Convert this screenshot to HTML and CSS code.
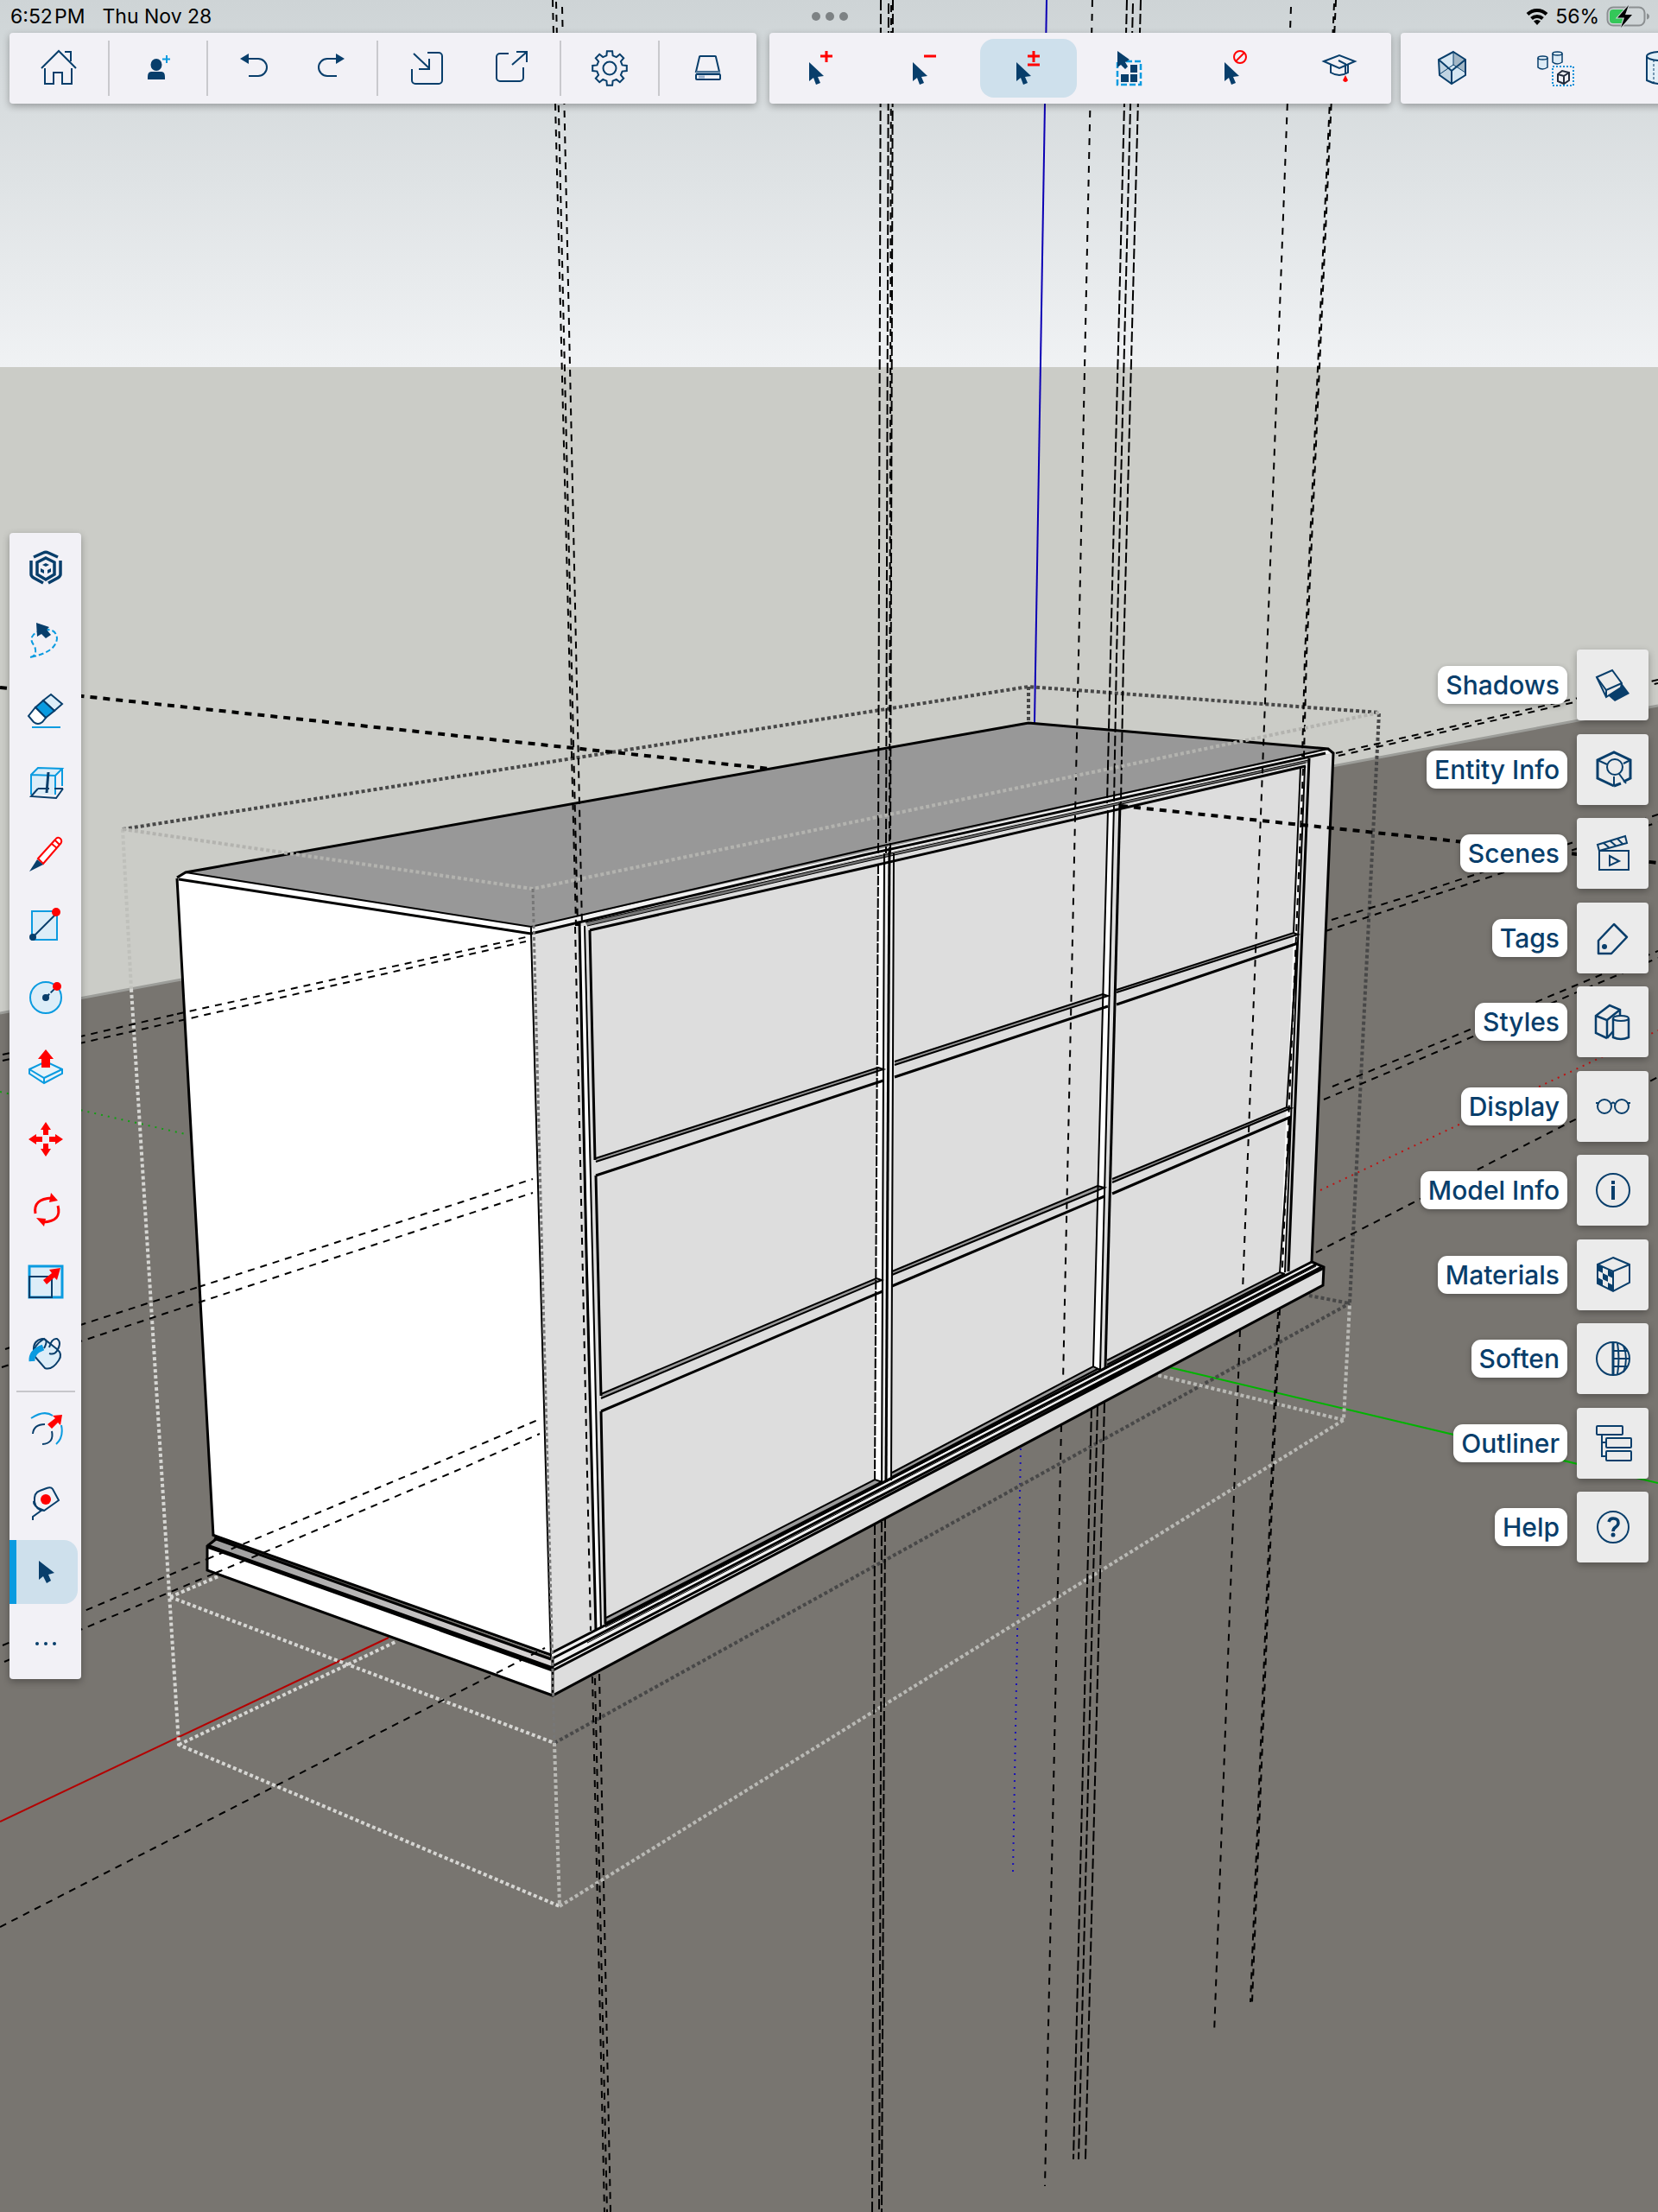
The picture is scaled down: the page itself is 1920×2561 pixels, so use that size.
FILE: index.html
```html
<!DOCTYPE html>
<html lang="en">
<head>
<meta charset="utf-8">
<meta name="viewport" content="width=device-width, initial-scale=1">
<title>Model viewer</title>
<link rel="stylesheet" href="styles.css">
</head>
<body>
<main class="app">
  <svg class="scene" viewBox="0 0 1920 2561" preserveAspectRatio="xMidYMid slice" aria-label="3D model of a shelving cabinet" role="img">
    <defs>
      <linearGradient id="sky" x1="0" y1="0" x2="0" y2="1"><stop offset="0" stop-color="#ced4d6"/><stop offset="1" stop-color="#f0f2f4"/></linearGradient>
      <linearGradient id="bevel" x1="0" y1="0" x2="1" y2="0"><stop offset="0" stop-color="#9c9c9c"/><stop offset="1" stop-color="#dcd8d8"/></linearGradient>
    </defs>
    <!-- sky and ground -->
    <rect width="1920" height="426" fill="url(#sky)"/>
    <rect y="425" width="1920" height="2136" fill="#cbccc7"/>
    <path d="M0 1173L1920 817V2561H0z" fill="#787570"/>
    <path d="M0 1173L1920 817" stroke="#9c9d99" stroke-width="3"/>

    <!-- axes -->
    <path class="axis" stroke="#0c00b4" d="M1212 0L1198 837"/>
    <path class="axis" stroke="#b40000" d="M0 2109L450 1896"/>
    <path class="axis" stroke="#00b400" d="M1354 1583L1920 1717"/>
    <path class="axis-back" stroke="#1a10b8" d="M1182 1677L1173 2167"/>
    <path class="axis-back" stroke="#c01010" d="M1529 1378L1920 1193"/>
    <path class="axis-back" stroke="#10a010" d="M0 1264L215 1313"/>

    <!-- selection box edges behind the cabinet -->
    <path class="bounds dark" d="M142 960L1191 795L1597 825L1563 1509L1516 1500M1191 795V837M642 2018L1563 1509"/>
    <path class="bounds faint" d="M142 960L152 1145"/>
    <path class="bounds light" d="M152 1145L207 2020L648 2207M197 1849L642 2018M197 1849L253 1825M207 2020L460 1900"/>
    <path class="bounds pale" d="M648 2207L1556 1644L1563 1509M1556 1644L1340 1592M642 2018L648 2207"/>

    <!-- guides outside the cabinet -->
    <path class="guide bold" d="M0 796L891 890"/>
    <path class="guide" d="M3 1221L205 1174M3 1228L207 1182M6 1562L230 1490M2 1583L230 1508"/>
    <path class="guide" d="M3 1905L240 1805M5 1924L250 1821M0 2231L631 1908"/>
    <path class="guide" d="M1547 872L1920 787M1550 875L1920 791M1542 1065L1640 1035L1920 943M1535 1078L1640 1043L1920 952"/>
    <path class="guide" d="M1543 1258L1640 1218L1920 1101M1533 1273L1640 1228L1920 1109M1524 1450L1920 1247"/>
    <path class="guide" d="M686 1941L700 2561M689 1943L703 2561M694 1938L707 2561"/>
    <path class="guide tight" d="M1013 1765L1010 2561M1021 1762L1018 2561M1025 1757L1021 2561"/>
    <path class="guide sparse" d="M1229 1650L1210 2531M1436 1540L1406 2355"/>
    <path class="guide tight" d="M1264 1630L1243 2500M1271 1628L1249 2500M1279 1624L1257 2500"/>
    <path class="guide" d="M1482 1515L1450 2318M1480 1519L1448 2318"/>

    <!-- cabinet faces -->
    <path fill="#989898" d="M215 1010L1191 837L1538 867L615 1073z"/>
    <path fill="#fff" d="M205 1016L615 1080L638 1918L247 1778z"/>
    <path fill="#ddd" d="M615 1080L1544 872L1519 1461L638 1918z"/>
    <path fill="#fff" d="M215 1010L615 1073V1080L207 1016z"/>
    <path fill="#f1f1f1" d="M615 1073L1538 867L1542 872L615 1080z"/>
    <path fill="url(#bevel)" d="M240 1790L253 1782L638 1920L640 1932z"/>
    <path fill="#f1f1f1" d="M638 1914L1519 1461L1533 1467L640 1934z"/>
    <path fill="#fff" d="M240 1790L640 1934V1963L240 1818z"/>
    <path fill="#ddd" d="M640 1934L1533 1467L1532 1488L640 1963z"/>

    <!-- white inner sides of the openings -->
    <path fill="#fff" d="M672 1072H677L694 1884H690zM1017 1000L1024 998L1021 1715L1013 1713zM1283 938L1290 934L1274 1585L1266 1582zM1506 888L1512 886L1488 1473L1482 1474z"/>
    <path fill="#f0f0f0" d="M1026 990H1034L1031 1714H1023z"/>
    <!-- shelf tops and bottom rail -->
    <path fill="#9a9a9a" d="M690 1341L1017 1236L1023 1238L690 1345zM696 1614L1015 1480L1021 1482L696 1619zM1036 1229L1277 1151L1283 1153L1036 1233zM1033 1472L1271 1373L1279 1375L1033 1476zM1293 1146L1498 1080L1503 1082L1293 1149zM1288 1365L1490 1282L1495 1283L1288 1369z"/>
    <path fill="#9a9a9a" d="M702 1873L1013 1713L1022 1715L702 1879zM1033 1705L1266 1582L1274 1585L1033 1709zM1282 1575L1482 1473L1488 1475L1282 1580z"/>
    <path fill="#777" d="M678 1068L1000 995L1515 880V883L1000 998L680 1072z"/>

    <!-- cabinet edges -->
    <path class="edge heavy" d="M205 1016L215 1010L1191 837L1538 867L1544 872L1519 1461L1533 1467L1532 1488L640 1963L240 1818V1790L250 1782"/>
    <path class="edge heavy" d="M205 1017L247 1778M207 1018L615 1081L1000 990L1535 872"/>
    <path class="edge" d="M215 1010L615 1073L1000 984L1538 867M615 1073V1081L638 1920"/>
    <path class="edge thin" d="M678 1068L1000 995L1515 880M680 1072L1000 998L1512 883"/>
    <path class="edge heavy" d="M683 1077L1000 1005L1512 887M1516 878L1492 1472"/>
    <path class="edge" d="M1511 887L1488 1473M1506 889L1498 1080M1502 1094L1490 1282M1494 1294L1482 1474"/>
    <path class="edge heavy" d="M671 1068L679 1450L690 1887M683 1077L689 1343M690 1361L696 1616M696 1634L701 1880"/>
    <path class="edge" d="M677 1072L686 1450L696 1884"/>
    <path class="edge" d="M1017 1001L1013 1713" stroke-dasharray="11 2"/>
    <path class="edge" d="M1024 988L1021 1717M1035 988L1032 1714"/>
    <path class="edge heavy" d="M1030 986L1026 1716"/>
    <path class="edge" d="M1283 938L1266 1582M1290 932L1274 1586"/>
    <path class="edge heavy" d="M1297 930L1280 1584"/>
    <path class="edge" d="M690 1341L1017 1236L1023 1238L690 1345M696 1614L1015 1480L1021 1482L696 1619M1036 1229L1277 1151L1283 1153L1036 1233M1033 1472L1271 1373L1279 1375L1033 1476M1293 1146L1498 1080L1503 1082L1293 1149M1288 1365L1490 1282L1495 1283L1288 1369"/>
    <path class="edge heavy" d="M690 1361L1023 1251M696 1634L1022 1495M1036 1247L1283 1165M1033 1489L1279 1385M1293 1163L1503 1092M1288 1382L1495 1293"/>
    <path class="edge" d="M702 1873L1013 1713L1022 1716M702 1879L1020 1716M1033 1705L1266 1582L1274 1586M1033 1710L1271 1585M1282 1575L1482 1473L1488 1475M1282 1580L1487 1475"/>
    <path class="edge thin" d="M701 1884L1500 1471"/>
    <path class="edge heavy" d="M638 1914L1519 1461M640 1920L1524 1464M640 1929L1530 1467M640 1934L1533 1468"/>
    <path class="edge thin" d="M680 1902L1524 1466"/>
    <path class="edge heavy" d="M246 1777L638 1916M248 1781L638 1921M240 1789L640 1931M240 1791L640 1934M640 1920V1963"/>

    <!-- guides in front of the cabinet -->
    <path class="guide" d="M205 1174L609 1085M207 1182L609 1090M230 1490L617 1365M230 1508L617 1381M240 1805L492 1700L625 1643M250 1821L535 1700L625 1660M575 1937L631 1908"/>
    <path class="guide" d="M640 0L667 1072M644 2L669 1072M651 8L674 1072M666 1073L684 1888"/>
    <path class="guide tight" d="M1020 0L1017 990M1029 4L1026 988M1034 0L1031 988"/>
    <path class="guide" d="M1032 6L1030 988"/>
    <path class="guide sparse" d="M1265 0L1249 760L1231 1600M1495 8L1467 760L1439 1495"/>
    <path class="guide tight" d="M1305 0L1286 760L1282 930M1312 4L1293 760L1290 930M1321 0L1301 760L1298 930"/>
    <path class="guide" d="M1547 0L1513 760L1510 876M1545 4L1511 760L1508 876M1509 890L1485 1468"/>
    <path class="guide bold" d="M1298 933L1640 969L1920 999"/>

    <!-- selection box edges in front -->
    <path class="bounds top" d="M142 960L617 1029L1597 825"/>
    <path class="bounds mid" d="M617 1029L640 1934L642 2018"/>
  </svg>

  <header class="top">
    <div class="status">
      <div class="status-left"><span>6:52&#8202;PM</span><span>Thu Nov 28</span></div>
      <div class="dots"><i></i><i></i><i></i></div>
      <div class="status-right">
        <svg width="26" height="20" viewBox="0 0 26 20"><g fill="none" stroke="#000" stroke-width="4"><path d="M2 7.500a15.500 15.500 0 0 1 22 0"/><path d="M6.500 12.500a9.500 9.500 0 0 1 13 0"/></g><path d="M13 20l-4-4.500a6 6 0 0 1 8 0z"/></svg>
        <span>56%</span>
        <svg width="50" height="26" viewBox="0 0 50 26"><rect x="1.500" y="2.500" width="43" height="21" rx="6.500" fill="none" stroke="#8b8f91" stroke-width="2"/><path d="M47 9.500v7q3-1 3-3.500t-3-3.500z" fill="#8b8f91"/><path d="M8 5h14l-4 16H8q-4 0-4-4V9q0-4 4-4z" fill="#34c759"/><path d="M26 0L13 14.500h8L17 26l13-15h-8z" stroke="#d0d6d8" stroke-width="2" paint-order="stroke"/></svg>
      </div>
    </div>

    <nav class="toolbars" aria-label="Toolbars">
      <div class="toolbar file">
        <div class="group"><button aria-label="Home"><svg class="icon" viewBox="0 0 48 48"><path d="M4 24L24 4l20 20M31 5h7v11M8 24v18h10V29h10v13h11V24"/></svg></button></div>
        <div class="group"><button aria-label="Add person"><svg class="icon" viewBox="0 0 48 48"><g class="solid"><ellipse cx="22" cy="20" rx="6.500" ry="7"/><path d="M12 37v-3q0-6 4-6h12q4 0 4 6v3z"/></g><path stroke="#0a9be0" d="M34 9v9M29 13.500h9"/></svg></button></div>
        <div class="group undo"><button aria-label="Undo"><svg class="icon" viewBox="0 0 48 48"><path d="M16 13h13a10 10 0 0 1 0 20H18"/><path class="solid" d="M8 13l10-6v12z"/></svg></button><button aria-label="Redo"><svg class="icon" viewBox="0 0 48 48"><path d="M30 13H19a10 10 0 0 0 0 20h11"/><path class="solid" d="M39 13l-10-6v12z"/></svg></button></div>
        <div class="group share"><button aria-label="Import"><svg class="icon" viewBox="0 0 48 48"><path d="M7 25v13a4 4 0 0 0 4 4h27a4 4 0 0 0 4-4V10a4 4 0 0 0-4-4H25M9 7l18 17M15 25h12V13"/></svg></button><button aria-label="Export"><svg class="icon" viewBox="0 0 48 48"><path d="M21 7H11a4 4 0 0 0-4 4v24a4 4 0 0 0 4 4h23a4 4 0 0 0 4-4V23M25 20L41 6M30 5h12v12"/></svg></button></div>
        <div class="group"><button aria-label="Settings"><svg class="icon" viewBox="0 0 48 48"><path d="M20.400 9.400L20.900 4.200H27.100L27.600 9.400L31.800 11.100L35.800 7.800L40.200 12.200L36.900 16.200L38.600 20.400L43.800 20.900V27.100L38.600 27.600L36.900 31.800L40.200 35.800L35.800 40.200L31.800 36.900L27.600 38.600L27.100 43.800H20.900L20.400 38.600L16.200 36.900L12.200 40.200L7.800 35.800L11.100 31.800L9.400 27.600L4.200 27.100V20.900L9.400 20.400L11.100 16.200L7.800 12.200L12.200 7.800L16.200 11.100z"/><circle cx="24" cy="24" r="7.500"/></svg></button></div>
        <div class="group"><button aria-label="Scan"><svg class="icon" viewBox="0 0 48 48"><path d="M15 10h17q1 0 1 1l4 17H10l4-17q0-1 1-1z"/><path stroke="#6d8eac" stroke-width="3" d="M10 29h28"/><rect x="10" y="31" width="28" height="6" rx="1"/><path stroke="#9ab0cc" stroke-width="3" d="M13 34h7"/></svg></button></div>
      </div>

      <div class="toolbar select">
        <button aria-label="Add to selection"><svg class="icon" viewBox="0 0 48 48"><path class="solid" d="M10 17v22l5-4 3 8 5-2-3-7 7-1z"/><path class="red sign" d="M30 4v13M23 10h14"/></svg></button>
        <button aria-label="Remove from selection"><svg class="icon" viewBox="0 0 48 48"><path class="solid" d="M10 17v22l5-4 3 8 5-2-3-7 7-1z"/><path class="red sign" d="M23 10h14"/></svg></button>
        <button class="active" aria-label="Toggle selection" aria-pressed="true"><svg class="icon" viewBox="0 0 48 48"><path class="solid" d="M10 17v22l5-4 3 8 5-2-3-7 7-1z"/><path class="red sign" d="M30 4v13M23 10h14M23 20h14"/></svg></button>
        <button aria-label="Select all"><svg class="icon" viewBox="0 0 48 48"><path stroke="#0a9be0" stroke-width="2.500" stroke-dasharray="7 3" d="M7 16h27v27H7z"/><path class="solid" d="M22 20h8v9h-8zM11 31h9v9h-9zM22 31h8v9h-8z"/><path class="solid" d="M7 4v19l4-3 5 5 3-3-3-5 5-3z"/></svg></button>
        <button aria-label="Select none"><svg class="icon" viewBox="0 0 48 48"><path class="solid" d="M11 17v22l5-4 3 8 5-2-3-7 7-1z"/><circle class="red" cx="29" cy="11" r="7"/><path class="red" d="M24 16L34 6"/></svg></button>
        <button aria-label="Learn"><svg class="icon" viewBox="0 0 48 48"><path d="M6 16L24 9l18 7-18 8zM14 20v9q10 6 20 0v-9M23 15l8 4v12"/><path class="redfill" d="M31 32l3 6q-3 4-6 0z"/></svg></button>
      </div>

      <div class="toolbar models">
        <button aria-label="Solid"><svg class="icon" viewBox="0 0 48 48"><path fill="#d5e6f2" stroke="none" d="M25 5l14 9v18L23 42 9 32 8 14z"/><path fill="#a3b7c6" stroke="none" d="M25 5l14 9v14L25 20z"/><path fill="#c0d4e2" stroke="none" d="M8 14l15 12v16L9 32z"/><path stroke-width="1" d="M25 5v15L9 31M25 20l14 9"/><path d="M25 5l14 9v18L23 42 9 32 8 14zM8 14l15 13 16-13M23 27v15"/></svg></button>
        <button aria-label="Components"><svg class="icon" viewBox="0 0 48 48"><g stroke-width="1.500" fill="#dceaf5"><path d="M3 12v11q5 4 11 0V12"/><ellipse cx="8.500" cy="12" rx="5.500" ry="2"/><path d="M20 7v10q5 4 11 0V7"/><ellipse cx="25.500" cy="7" rx="5.500" ry="2"/></g><path stroke="#0a8fd8" stroke-dasharray="2 2" d="M20 22h24v22H20z"/><path stroke="#222b3c" d="M26 31l5-4 8 2v9l-6 4-7-3zM26 31l7 2v8M33 33l6-4"/></svg></button>
        <button aria-label="Primitives"><svg class="icon" viewBox="0 0 48 48"><path fill="#e3f0f8" d="M9 10v28q15 8 30 0V10"/><ellipse cx="24" cy="10" rx="15" ry="5" fill="#e3f0f8"/><path stroke-width="1" stroke-dasharray="3 2" d="M17 14v28"/></svg></button>
      </div>
    </nav>
  </header>

  <nav class="tools" aria-label="Drawing tools">
    <button aria-label="Menu"><svg class="icon" viewBox="0 0 48 48"><g stroke-width="3.500"><path d="M10 11l11-5q3-1.500 6 0l11 5M7 15v16q0 2 3 4l11 6M41 15v16q0 2-3 4l-11 6"/><path d="M24 12l10 5v14l-10 6-10-6V17z"/></g><path class="solid" d="M24 18l4 2-4 2-4-2zM18 24l4 2v4l-4-2zM30 24l-4 2v4l4-2z"/></svg></button>
    <button aria-label="Lasso"><svg class="icon" viewBox="0 0 48 48"><path class="blue" stroke-dasharray="6 3" d="M6 44q9-2 5-13-6-7-2-12Q13 13 26 12q10 0 11 10-1 16-31 22"/><path class="solid" d="M13 4l15 5-3 3 5 6-6 4-5-5-5 3z"/></svg></button>
    <button aria-label="Eraser"><svg class="icon" viewBox="0 0 48 48"><path fill="#dcedf8" d="M30 5l13 11-9 8-13-12z"/><path fill="#0a9be0" d="M21 12l13 12-10 8-12-12z"/><path fill="#fff" d="M12 20l12 12-4 5q-5 4-10 0l-6-7z"/><path class="blue" d="M8 43h33"/></svg></button>
    <button aria-label="Section plane"><svg class="icon" viewBox="0 0 48 48"><path fill="#dcedf8" stroke="none" d="M7 15l8-8h28l-8 9v22H7z"/><path class="blue" d="M7 38V15l8-8 28 1-8 8v22M7 15l28 1M43 8v20"/><path d="M15 31L7 40l29 2 8-11M15 31h13M34 31h10"/><path stroke-width="3" d="M27 12l-2 24"/></svg></button>
    <button aria-label="Pencil"><svg class="icon" viewBox="0 0 48 48"><path class="red" fill="#fff" d="M15 29L35 7q3-4 6-1t-1 7L21 35zM31 12l6 5M35 8l5 5"/><path class="solid" d="M5 44l9-14 7 6z"/></svg></button>
    <button aria-label="Rectangle"><svg class="icon" viewBox="0 0 48 48"><path class="blue" fill="#dcedf8" d="M8 8h29v33H8z"/><path d="M10 37L36 11"/><circle class="solid" cx="9" cy="38" r="4"/><circle class="redfill" cx="36" cy="9" r="5"/></svg></button>
    <button aria-label="Circle"><svg class="icon" viewBox="0 0 48 48"><circle class="blue" fill="#dcedf8" cx="24" cy="25" r="18"/><path stroke-dasharray="6 2" d="M24 25l12-12"/><circle class="solid" cx="24" cy="25" r="4"/><circle class="redfill" cx="37" cy="12" r="5"/></svg></button>
    <button aria-label="Push pull"><svg class="icon" viewBox="0 0 48 48"><path class="blue" fill="#e8f3fa" d="M5 26l19-9 19 9v5L22 42 5 31z"/><path class="blue" d="M5 26l17 10 21-10M22 36v6"/><path class="redfill" d="M24 3l9 11h-4v10H19V14h-4z"/></svg></button>
    <button aria-label="Move"><svg class="icon" viewBox="0 0 48 48"><path class="redfill" d="M24 4l6 9h-3v6h-6v-6h-3zM24 44l-6-9h3v-6h6v6h3zM4 24l9-6v3h7v6h-7v3zM44 24l-9 6v-3h-7v-6h7v-3z"/></svg></button>
    <button aria-label="Rotate"><svg class="icon" viewBox="0 0 48 48"><path class="red" stroke-width="3" d="M12 28q-3-17 19-18M38 19q5 18-17 19"/><path class="redfill" d="M30 4l8 9-10 2zM22 43l-9-10 11 1z"/></svg></button>
    <button aria-label="Scale"><svg class="icon" viewBox="0 0 48 48"><path class="blue" stroke-width="3" fill="#dcedf8" d="M5 6h38v36H5z"/><path d="M5 18h26v24H5z"/><path class="redfill" d="M21 22l10-8-3-4 13-2-4 14-3-3-9 8z"/></svg></button>
    <button aria-label="Paint"><svg class="icon" viewBox="0 0 48 48"><path fill="#dcedf8" d="M22 8l15 12q7 6 2 13-8 12-16 9L10 27Q9 16 22 8z"/><path d="M10 22Q9 10 20 8q8 0 2 11M28 18q3-11 9-10 6 4 0 14-3 5-9 3"/><path class="blue" stroke-width="7" d="M8 34q-1-11 13-16"/></svg></button>
    <hr>
    <button aria-label="Offset"><svg class="icon" viewBox="0 0 48 48"><path class="blue" d="M7 11Q22 1 32 8M42 19q3 14-6 22"/><path d="M9 29Q10 18 23 18M31 26q3 14-11 15"/><path class="redfill" d="M26 18l9-7-3-3 11-1-2 12-3-3-7 7z"/></svg></button>
    <button aria-label="Tape measure"><svg class="icon" viewBox="0 0 48 48"><path d="M11 25q-1-11 6-13l8-3q5-2 7 1l7 13-17 12q-9 0-11-10z"/><circle class="redfill" cx="24" cy="22" r="6"/><path d="M10 24q-1 6 10 10L9 42v4"/></svg></button>
    <button class="active" aria-label="Select" aria-pressed="true"><svg class="icon" viewBox="0 0 48 48"><path class="solid" d="M16 11v22l5-4 4 8 5-3-3-7 7-2z"/></svg></button>
    <button aria-label="More tools"><svg class="icon" viewBox="0 0 48 48"><g class="solid"><circle cx="14" cy="24" r="2"/><circle cx="24" cy="24" r="2"/><circle cx="34" cy="24" r="2"/></g></svg></button>
  </nav>

  <nav class="panels" aria-label="Panels">
    <button><span class="name">Shadows</span><span class="tile"><svg class="icon" viewBox="0 0 48 48"><path class="solid" d="M18 36l16-14 9 12-17 9z"/><path fill="#ebebeb" d="M5 15l18-8 11 15-1 5-17 11z"/><path d="M5 15l11 15 18-8M16 30v8"/></svg></span></button>
    <button><span class="name">Entity Info</span><span class="tile"><svg class="icon" viewBox="0 0 48 48"><path stroke-width="3" d="M25 43L6 34V13l19-9 19 9v21l-8 4M25 43l8-3"/><path d="M6 13l11 5M44 13l-8 4M25 32v11M31 29l8 11"/><circle cx="26" cy="21" r="9" fill="#ebebeb"/></svg></span></button>
    <button><span class="name">Scenes</span><span class="tile"><svg class="icon" viewBox="0 0 48 48"><path d="M8 21h34v22H8zM8 21l-2-7 32-10 2 8zM13 12l6 5M21 10l6 5M29 7l6 6M20 27l11 6-11 5z"/></svg></span></button>
    <button><span class="name">Tags</span><span class="tile"><svg class="icon" viewBox="0 0 48 48"><path stroke-width="2.500" stroke-linejoin="round" d="M25 8l15 15-18 19H7V27z"/><circle class="solid" cx="14" cy="34" r="3"/></svg></span></button>
    <button><span class="name">Styles</span><span class="tile"><svg class="icon" viewBox="0 0 48 48"><path stroke-width="2.500" d="M17 43L4 37V17L20 5l12 5v8M4 17l13 5v21M17 22L32 10M17 43l8-9"/><path fill="#ebebeb" stroke-width="2.500" d="M24 20v22q9 4 18 0V20"/><ellipse fill="#ebebeb" cx="33" cy="20" rx="9" ry="3"/></svg></span></button>
    <button><span class="name">Display</span><span class="tile"><svg class="icon" viewBox="0 0 48 48"><circle cx="14" cy="24" r="8"/><circle cx="34" cy="24" r="8"/><path d="M22 21q2-3 4 0M4 20h4M40 20h4"/></svg></span></button>
    <button><span class="name">Model Info</span><span class="tile"><svg class="icon" viewBox="0 0 48 48"><circle cx="24" cy="24" r="19"/><path stroke-width="4" d="M24 19v16M24 13v4"/></svg></span></button>
    <button><span class="name">Materials</span><span class="tile"><svg class="icon" viewBox="0 0 48 48"><path d="M24 4l19 8v21L24 43 6 34V12zM6 12l18 8 19-8M24 20v23"/><path class="solid" d="M6 12l6 3v7l-6-3zM18 18l6 3v7l-6-3zM12 22l6 3v7l-6-3zM6 27l6 3v7l-6-3zM18 33l6 3v7l-6-3z"/></svg></span></button>
    <button><span class="name">Soften</span><span class="tile"><svg class="icon" viewBox="0 0 48 48"><circle cx="24" cy="24" r="19"/><path stroke-width="3" d="M24 5v38"/><path d="M29 6q3 18 0 36M36 9q6 15 0 31M24 15h17M24 24h19M24 33h17"/></svg></span></button>
    <button><span class="name">Outliner</span><span class="tile"><svg class="icon" viewBox="0 0 48 48"><rect x="5" y="4" width="30" height="10" rx="1"/><rect x="16" y="18" width="29" height="11" rx="1"/><rect x="16" y="33" width="29" height="11" rx="1"/><path d="M11 14v25h5M11 23h5"/></svg></span></button>
    <button><span class="name">Help</span><span class="tile"><svg class="icon" viewBox="0 0 48 48"><circle cx="24" cy="24" r="18"/><path stroke-width="3.500" d="M19 18q1-4 5-4 6 0 6 5 0 3-3 5-3 2-3 5"/><circle class="solid" cx="24" cy="33" r="2.500"/></svg></span></button>
  </nav>
</main>
</body>
</html>
```
FILE: styles.css
```css
* { box-sizing: border-box; }

body {
  margin: 0;
  font-family: Inter, "Liberation Sans", sans-serif;
  color: #000;
}

/* Everything shares one grid cell, so the controls float over the scene. */
.app {
  display: grid;
  grid-template: minmax(100vh, auto) / minmax(0, 1fr);
  overflow: hidden;
  background: #787570;
}
.app > * { grid-area: 1 / 1; }

.scene {
  display: block;
  width: 100%;
  height: 100%;
}
.axis, .axis-back, .guide, .edge, .bounds { fill: none; }
.axis { stroke-width: 2; }
.axis-back { stroke-width: 2; stroke-dasharray: 2 6; }
.guide { stroke: #000; stroke-width: 2; stroke-dasharray: 8 7; }
.guide.tight { stroke-dasharray: 12 4; }
.guide.sparse { stroke-dasharray: 8 8; }
.guide.bold { stroke-width: 4; }
.edge { stroke: #000; stroke-width: 2; }
.edge.heavy { stroke-width: 3; }
.edge.thin { stroke-width: 1; }
.bounds { stroke-width: 4; stroke-dasharray: 4 3; }
.bounds.dark { stroke: #484848; }
.bounds.light { stroke: #d6d6d3; }
.bounds.pale { stroke: #b9b9b5; }
.bounds.faint { stroke: #bfc0bb; }
.bounds.top { stroke: #b3b3af; }
.bounds.mid { stroke: #777; stroke-width: 3; }

button {
  display: flex;
  align-items: center;
  justify-content: center;
  padding: 0;
  border: 0;
  background: none;
  font: inherit;
  color: inherit;
}

.icon {
  width: 48px;
  height: 48px;
  flex: none;
  fill: none;
  stroke: #083e6b;
  stroke-width: 2;
}
.icon .solid { fill: #083e6b; stroke: none; }
.icon .red { stroke: #f00; }
.icon .sign { stroke-width: 3; }
.icon .redfill { fill: #f00; stroke: none; }
.icon .blue { stroke: #0a9be0; }

.top { align-self: start; min-width: 0; }

.status {
  display: grid;
  grid-template-columns: 1fr auto 1fr;
  align-items: center;
  height: 38px;
  padding: 0 10px 0 12px;
  font-size: 23px;
  line-height: 36px;
}
.status-left, .status-right, .dots { display: flex; align-items: center; }
.status-left { gap: 20px; }
.status-right { justify-content: flex-end; gap: 8px; }
.dots { gap: 6px; }
.dots i { width: 10px; height: 10px; border-radius: 50%; background: #7d8284; }

.toolbars { display: flex; padding-left: 11px; }
.toolbar {
  display: flex;
  flex: none;
  align-items: center;
  height: 82px;
  border-radius: 4px;
  background: #f2f1f6;
  box-shadow: 0 3px 8px rgba(0, 0, 0, 0.3);
}
.toolbar.file { margin-right: 15px; }
.toolbar.select { margin-right: 11px; }
.group {
  display: flex;
  justify-content: center;
  width: 114px;
  height: 64px;
}
.group + .group { border-left: 2px solid #c9c9cd; }
.group.undo { width: 197px; gap: 42px; }
.group.share { width: 212px; gap: 50px; }
.select button, .models button { width: 120px; height: 68px; }
.select .active {
  width: 112px;
  margin: 0 4px;
  border-radius: 16px;
  background: #cee0ec;
}

.tools {
  display: flex;
  flex-direction: column;
  place-self: center start;
  width: 83px;
  min-height: 1327px;
  margin-left: 11px;
  border-radius: 4px;
  background: #f2f1f6;
  box-shadow: 0 3px 8px rgba(0, 0, 0, 0.3);
}
.tools button {
  flex: 1;
  margin: 4px 4px 4px 0;
  padding-left: 4px;
}
.tools hr {
  width: 68px;
  height: 2px;
  margin: 2px auto;
  border: 0;
  background: #c6c6ca;
}
.tools .active {
  padding: 0 4px 0 0;
  border-left: 8px solid #0a9be0;
  border-radius: 0 16px 16px 0;
  background: #cee0ec;
}

.panels {
  display: flex;
  flex-direction: column;
  align-items: flex-end;
  justify-content: space-between;
  place-self: center end;
  min-height: 1057px;
  margin-right: 11px;
}
.panels button { gap: 11px; }
.name {
  padding: 0 9px;
  border-radius: 11px;
  background: #fff;
  color: #083e6b;
  font-size: 30px;
  font-weight: 500;
  line-height: 44px;
  box-shadow: 0 2px 6px rgba(0, 0, 0, 0.3);
}
.tile {
  display: flex;
  align-items: center;
  justify-content: center;
  width: 83px;
  height: 82px;
  border-radius: 4px;
  background: #ebebeb;
  box-shadow: 0 3px 8px rgba(0, 0, 0, 0.3);
}
```
